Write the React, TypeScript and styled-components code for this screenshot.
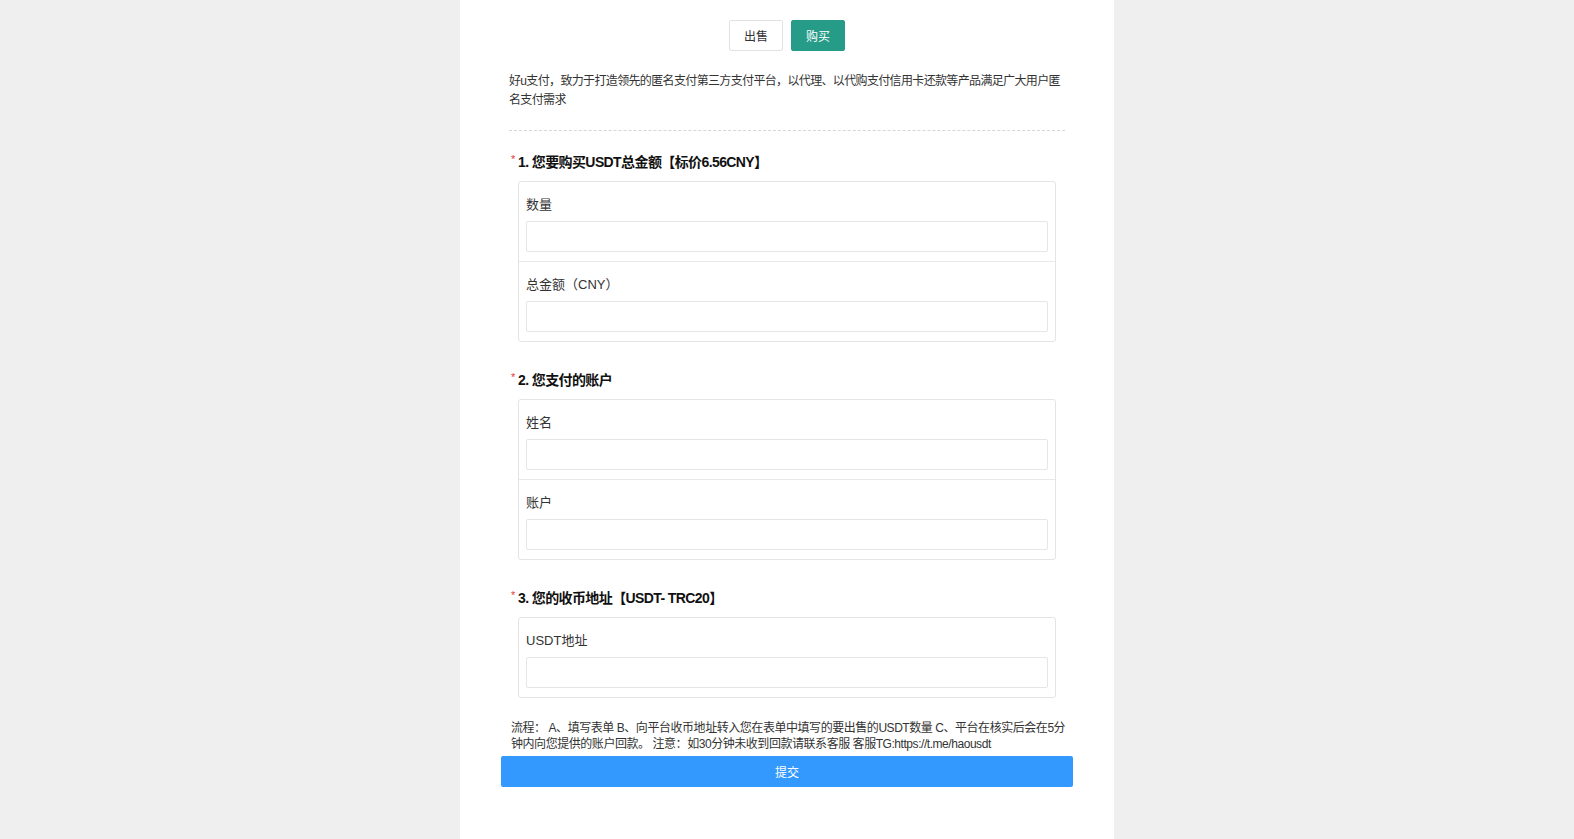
import React from 'react'
import styled, { createGlobalStyle } from 'styled-components'

const GlobalStyle = createGlobalStyle`
  html, body {
    margin: 0;
    padding: 0;
    background: #efefef;
    font-family: "Liberation Sans", "Noto Sans CJK SC", sans-serif;
    color: #333;
  }
  * { box-sizing: border-box; }
`

const Column = styled.main`
  width: 654px;
  margin: 0 auto;
  min-height: 839px;
  background: #fff;
  padding: 20px 41px 40px;
`

const Tabs = styled.div`
  display: flex;
  justify-content: center;
  gap: 8px;
`

const Tab = styled.button<{ $active?: boolean }>`
  height: 31px;
  padding: 0 14px;
  font-size: 12px;
  font-family: inherit;
  border-radius: 2px;
  border: 1px solid ${p => (p.$active ? '#259b88' : '#e2e2e2')};
  background: ${p => (p.$active ? '#259b88' : '#fff')};
  color: ${p => (p.$active ? '#fff' : '#333')};
  cursor: pointer;
`

const Intro = styled.p`
  margin: 21px 8px 0;
  font-size: 12px;
  line-height: 19px;
  letter-spacing: -0.65px;
  color: #333;
  padding-bottom: 20px;
  border-bottom: 1px dashed #d6d6d6;
`

const Section = styled.section`
  margin: 0 8px;
  padding-top: 21px;
  & + & {
    padding-top: 28px;
  }
`

const Title = styled.h3`
  margin: 0 0 9px;
  font-size: 14px;
  line-height: 20px;
  letter-spacing: -0.6px;
  font-weight: bold;
  color: #111;
  display: flex;
  align-items: flex-start;
`

const Star = styled.span`
  color: #e4393c;
  font-size: 11px;
  line-height: 14px;
  font-weight: normal;
  width: 9px;
  padding-left: 2px;
`

const Card = styled.div`
  margin: 0 9px;
  border: 1px solid #e4e4e4;
  border-radius: 3px;
`

const Row = styled.div`
  padding: 13px 7px 9px;
  & + & {
    border-top: 1px solid #e9e9e9;
  }
`

const Label = styled.label`
  display: block;
  font-size: 13px;
  line-height: 20px;
  color: #333;
  margin-bottom: 6px;
`

const Input = styled.input`
  display: block;
  width: 100%;
  height: 31px;
  border: 1px solid #e6e6e6;
  border-radius: 2px;
  outline: none;
  padding: 0 8px;
  font-size: 13px;
`

const Notice = styled.p`
  margin: 22px 0 0 10px;
  width: 562px;
  font-size: 12px;
  line-height: 16px;
  letter-spacing: -0.45px;
  color: #333;
`

const Submit = styled.button`
  display: block;
  width: 572px;
  height: 31px;
  margin-top: 4px;
  border: none;
  border-radius: 2px;
  background: #3399ff;
  color: #fff;
  font-size: 12px;
  font-family: inherit;
  cursor: pointer;
`

const sections = [
  { title: '1. 您要购买USDT总金额【标价6.56CNY】', fields: ['数量', '总金额（CNY）'] },
  { title: '2. 您支付的账户', fields: ['姓名', '账户'] },
  { title: '3. 您的收币地址【USDT- TRC20】', fields: ['USDT地址'] },
]

const App = () => {
  return (
    <>
      <GlobalStyle />
      <Column>
        <Tabs>
          <Tab type="button">出售</Tab>
          <Tab type="button" $active>购买</Tab>
        </Tabs>
        <Intro>
          好u支付，致力于打造领先的匿名支付第三方支付平台，以代理、以代购支付信用卡还款等产品满足广大用户匿名支付需求
        </Intro>
        <form onSubmit={e => e.preventDefault()}>
          {sections.map(s => (
            <Section key={s.title}>
              <Title>
                <Star>*</Star>
                {s.title}
              </Title>
              <Card>
                {s.fields.map(f => (
                  <Row key={f}>
                    <Label>{f}</Label>
                    <Input type="text" />
                  </Row>
                ))}
              </Card>
            </Section>
          ))}
          <Notice>
            流程： A、填写表单 B、向平台收币地址转入您在表单中填写的要出售的USDT数量 C、平台在核实后会在5分钟内向您提供的账户回款。 注意：如30分钟未收到回款请联系客服 客服TG:https://t.me/haousdt
          </Notice>
          <Submit type="submit">提交</Submit>
        </form>
      </Column>
    </>
  )
}

export default App
